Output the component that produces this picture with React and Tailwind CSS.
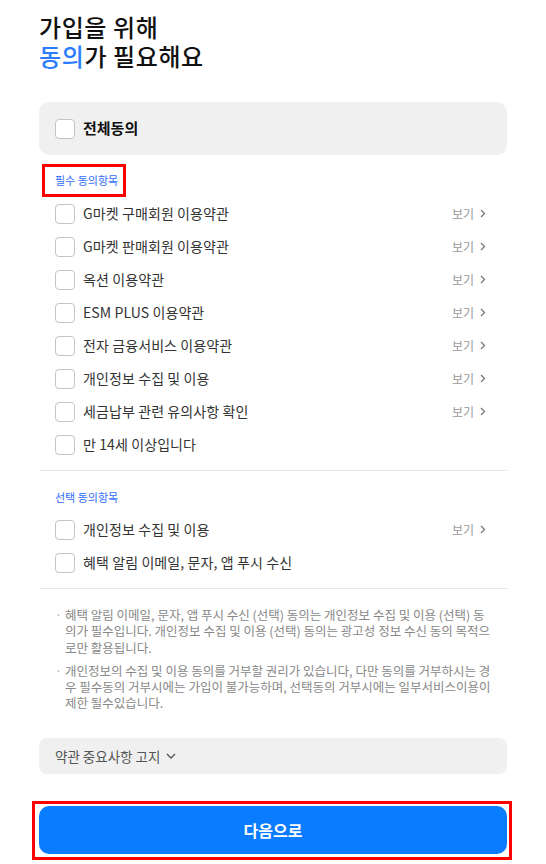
import React from "react";

const font = { fontFamily: '"Noto Sans CJK KR", "Noto Sans", sans-serif' };

function Box() {
  return <div className="w-[20px] h-[20px] shrink-0 rounded-[4px] border border-[#c4c4c4] bg-white" />;
}

function Chevron() {
  return (
    <svg width="6" height="9" viewBox="0 0 6 9" className="ml-[6px]">
      <path d="M1 1 L4.5 4.5 L1 8" fill="none" stroke="#777" strokeWidth="1.3" />
    </svg>
  );
}

function Row({ label, view }) {
  return (
    <div className="flex items-center h-[33px] pl-4 pr-[21px]">
      <Box />
      <span className="ml-2 text-[14px] tracking-[0.1px] text-[#333]">{label}</span>
      {view && (
        <span className="ml-auto flex items-center text-[12px] text-[#999]">
          보기
          <Chevron />
        </span>
      )}
    </div>
  );
}

export default function App() {
  const req = [
    "G마켓 구매회원 이용약관",
    "G마켓 판매회원 이용약관",
    "옥션 이용약관",
    "ESM PLUS 이용약관",
    "전자 금융서비스 이용약관",
    "개인정보 수집 및 이용",
    "세금납부 관련 유의사항 확인",
  ];
  return (
    <div className="w-[546px] h-[864px] bg-white px-[39px] overflow-hidden" style={font}>
      <h1 className="pt-[12px] text-[24px] leading-[29px] tracking-[0.6px] font-medium text-[#111]">
        <div>가입을 위해</div>
        <div>
          <span className="text-[#2a7cff]">동의</span>가 필요해요
        </div>
      </h1>

      <div className="mt-[32px] h-[53px] rounded-[10px] bg-[#f0f0f0] flex items-center px-4">
        <Box />
        <span className="ml-2 text-[15px] font-semibold text-[#111]">전체동의</span>
      </div>

      <div className="mt-[9px] ml-[3px] w-[84px] h-[33px] border-[3px] border-[#f00] flex items-center pl-[10px]">
        <span className="text-[11px] text-[#2f6dff]">필수 동의항목</span>
      </div>

      <div>
        {req.map((r) => (
          <Row key={r} label={r} view />
        ))}
        <Row label="만 14세 이상입니다" />
      </div>

      <div className="mt-[9px] border-t border-[#e8e8e8]" />

      <div className="pl-4 mt-[19px] text-[11px] leading-[14px] text-[#2f6dff]">선택 동의항목</div>
      <div className="mt-[9px]">
        <Row label="개인정보 수집 및 이용" view />
        <Row label="혜택 알림 이메일, 문자, 앱 푸시 수신" />
      </div>

      <div className="mt-[9px] border-t border-[#e8e8e8]" />

      <div className="mt-[18px] pl-4 pr-4 flex flex-col gap-[7px] text-[12.5px] leading-[16.3px] text-[#888]">
        <div className="relative pl-[10px]">
          <span className="absolute left-0 top-0 text-[#bbb]">·</span>
          혜택 알림 이메일, 문자, 앱 푸시 수신 (선택) 동의는 개인정보 수집 및 이용 (선택) 동의가 필수입니다. 개인정보 수집 및 이용 (선택) 동의는 광고성 정보 수신 동의 목적으로만 활용됩니다.
        </div>
        <div className="relative pl-[10px]">
          <span className="absolute left-0 top-0 text-[#bbb]">·</span>
          개인정보의 수집 및 이용 동의를 거부할 권리가 있습니다, 다만 동의를 거부하시는 경우 필수동의 거부시에는 가입이 불가능하며, 선택동의 거부시에는 일부서비스이용이 제한 될수있습니다.
        </div>
      </div>

      <div className="mt-[26px] h-[36px] rounded-[8px] bg-[#f0f0f0] flex items-center px-4 text-[13.5px] text-[#555]">
        약관 중요사항 고지
        <svg width="10" height="6" viewBox="0 0 10 6" className="ml-[6px]">
          <path d="M1 1 L5 5 L9 1" fill="none" stroke="#555" strokeWidth="1.3" />
        </svg>
      </div>

      <div className="mt-[27px] ml-[-7px] w-[480px] border-[3px] border-[#f00] pl-[4px] pr-[2px] pt-[2px] pb-[3px]">
        <button className="w-full h-[48px] rounded-[10px] bg-[#0a7cff] text-white text-[16px] font-bold">
          다음으로
        </button>
      </div>
    </div>
  );
}
